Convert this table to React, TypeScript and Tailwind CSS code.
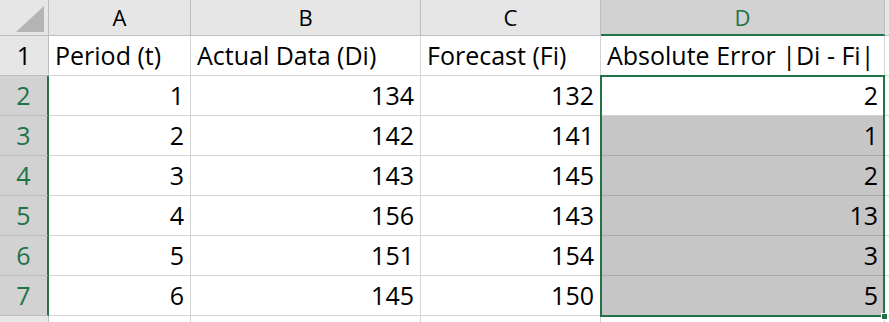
import React from "react";

const rows = [
  [1, 134, 132, 2],
  [2, 142, 141, 1],
  [3, 143, 145, 2],
  [4, 156, 143, 13],
  [5, 151, 154, 3],
  [6, 145, 150, 5],
];

const cols = ["A", "B", "C", "D"];

const font = { fontFamily: "'Open Sans', 'Liberation Sans', sans-serif" };

function Corner() {
  return (
    <div className="relative bg-[#e6e6e6] border-r border-b border-[#bdbdbd]">
      <svg className="absolute right-[4px] bottom-[3px]" width="28" height="26" viewBox="0 0 28 26">
        <polygon points="28,0 28,26 0,26" fill="#b4b4b4" />
      </svg>
    </div>
  );
}

export default function App() {
  return (
    <div className="w-[889px] h-[322px] overflow-hidden bg-white text-black" style={font}>
      <div className="relative grid grid-cols-[49px_142px_230px_180px_284px_40px] grid-rows-[36px_repeat(8,40px)]">
        {/* column headers */}
        <Corner />
        {cols.map((c) => (
          <div
            key={c}
            className={
              c === "D"
                ? "flex items-center justify-center bg-[#d2d2d2] text-[#217346] border-r border-[#bdbdbd] border-b-2 border-b-[#217346] text-[22px]"
                : "flex items-center justify-center bg-[#e6e6e6] border-r border-b border-[#bdbdbd] text-[22px]"
            }
          >
            {c}
          </div>
        ))}
        <div className="bg-[#e6e6e6] border-b border-[#bdbdbd]" />

        {/* row 1: titles */}
        <div className="flex items-end justify-center pb-[1px] bg-[#e6e6e6] border-r border-b border-[#bdbdbd] text-[25px]">1</div>
        <div className="flex items-end pl-[6px] pb-[1px] border-r border-b border-[#d4d4d4] text-[25px] whitespace-nowrap">Period (t)</div>
        <div className="flex items-end pl-[6px] pb-[1px] border-r border-b border-[#d4d4d4] text-[25px] whitespace-nowrap">Actual Data (Di)</div>
        <div className="flex items-end pl-[6px] pb-[1px] border-r border-b border-[#d4d4d4] text-[25px] whitespace-nowrap">Forecast (Fi)</div>
        <div className="flex items-end pl-[6px] pb-[1px] border-r border-b border-[#d4d4d4] text-[25px] whitespace-nowrap">Absolute Error |Di - Fi|</div>
        <div className="border-b border-[#d4d4d4]" />

        {/* data rows */}
        {rows.map((r, i) => (
          <React.Fragment key={i}>
            <div className="flex items-end justify-center pb-[1px] bg-[#d2d2d2] text-[#217346] border-r-2 border-r-[#217346] border-b border-[#bdbdbd] text-[25px]">
              {i + 2}
            </div>
            {r.map((v, j) => (
              <div
                key={j}
                className={
                  j === 3 && i > 0
                    ? "flex items-end justify-end pr-[6px] pb-[1px] bg-[#c6c6c6] border-r border-b border-[#a9a9a9] text-[25px]"
                    : "flex items-end justify-end pr-[6px] pb-[1px] border-r border-b border-[#d4d4d4] text-[25px]"
                }
              >
                {v}
              </div>
            ))}
            <div className="border-b border-[#d4d4d4]" />
          </React.Fragment>
        ))}

        {/* partial row 8 */}
        <div className="bg-[#e6e6e6] border-r border-[#bdbdbd]" />
        <div className="border-r border-[#d4d4d4]" />
        <div className="border-r border-[#d4d4d4]" />
        <div className="border-r border-[#d4d4d4]" />
        <div className="border-r border-[#d4d4d4]" />
        <div />

        {/* selection frame D2:D7 with fill handle */}
        <div className="absolute left-[600px] top-[75px] w-[285px] h-[242px] border-2 border-[#217346] pointer-events-none">
          <div className="absolute -right-[5px] -bottom-[5px] w-[7px] h-[7px] bg-[#217346] border border-white" />
        </div>
      </div>
    </div>
  );
}
